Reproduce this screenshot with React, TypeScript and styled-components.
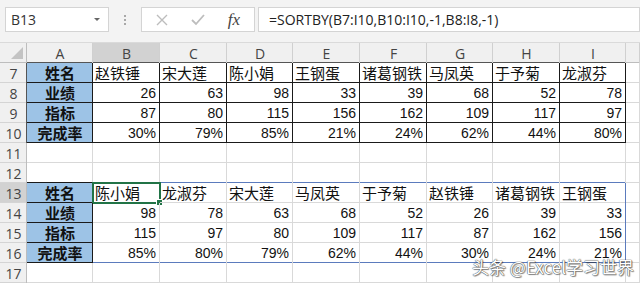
import * as React from 'react';
import styled, { createGlobalStyle, css } from 'styled-components';

const GlobalStyle = createGlobalStyle`
  html, body {
    margin: 0;
    padding: 0;
    background: #ffffff;
    overflow: hidden;
  }
  body {
    font-family: "Liberation Sans", "Noto Sans CJK SC", sans-serif;
  }
`;

const COL_WIDTHS = [66, 67, 67, 66, 67, 67, 66, 67, 66];
const LETTERS = ['A', 'B', 'C', 'D', 'E', 'F', 'G', 'H', 'I', ''];

const GRID = '#d9d9d9';
const BLACK = '#1a1a1a';
const SPILL = '#5b7bbd';

const labels = ['姓名', '业绩', '指标', '完成率'];

const top = [
  ['赵铁锤', '宋大莲', '陈小娟', '王钢蛋', '诸葛钢铁', '马凤英', '于予菊', '龙淑芬'],
  ['26', '63', '98', '33', '39', '68', '52', '78'],
  ['87', '80', '115', '156', '162', '109', '117', '97'],
  ['30%', '79%', '85%', '21%', '24%', '62%', '44%', '80%'],
];

const sorted = [
  ['陈小娟', '龙淑芬', '宋大莲', '马凤英', '于予菊', '赵铁锤', '诸葛钢铁', '王钢蛋'],
  ['98', '78', '63', '68', '52', '26', '39', '33'],
  ['115', '97', '80', '109', '117', '87', '162', '156'],
  ['85%', '80%', '79%', '62%', '44%', '30%', '24%', '21%'],
];

type CellInfo = { text: string; kind: 'empty' | 'label' | 'name' | 'num' };

function cellAt(row: number, col: number): CellInfo {
  // col 0 = A
  const block = row >= 7 && row <= 10 ? top : row >= 13 && row <= 16 ? sorted : null;
  if (!block) return { text: '', kind: 'empty' };
  const r = row >= 13 ? row - 13 : row - 7;
  if (col === 0) return { text: labels[r], kind: 'label' };
  if (col > 8) return { text: '', kind: 'empty' };
  return { text: block[r][col - 1], kind: r === 0 ? 'name' : 'num' };
}

// colour of the right / bottom edge of a cell
function rightEdge(row: number, col: number): string {
  if (row >= 7 && row <= 10 && col <= 8) return BLACK;
  if (row >= 13 && row <= 16) {
    if (col === 0) return BLACK;
    if (col === 8) return SPILL;
  }
  return GRID;
}

function bottomEdge(row: number, col: number): string {
  if (row >= 7 && row <= 10 && col <= 8) return BLACK;
  if (row === 12 && col === 0) return BLACK;
  if (row === 12 && col >= 1 && col <= 8) return SPILL;
  if (row >= 13 && row <= 16 && col === 0) return BLACK;
  if (row === 16 && col >= 1 && col <= 8) return SPILL;
  return GRID;
}

const Window = styled.div`
  width: 640px;
  height: 283px;
  position: relative;
  overflow: hidden;
  background: #fff;
`;

const FormulaBar = styled.div`
  height: 43px;
  box-sizing: border-box;
  display: flex;
  align-items: flex-start;
  padding: 7px 0 0 5px;
  background: #f3f3f3;
  border-bottom: 1px solid #dadada;
`;

const Box = styled.div<{ $w?: number }>`
  height: 25px;
  box-sizing: border-box;
  background: #fff;
  border: 1px solid #d4d4d4;
  display: flex;
  align-items: center;
  ${(p) => (p.$w ? css`width: ${p.$w}px; flex: none;` : css`flex: 1;`)}
`;

const NameText = styled.span`
  flex: 1;
  padding-left: 5px;
  font-family: "Open Sans", "Liberation Sans", sans-serif;
  font-size: 14px;
  color: #333;
`;

const Caret = styled.span`
  width: 0;
  height: 0;
  margin-right: 8px;
  border-left: 3px solid transparent;
  border-right: 3px solid transparent;
  border-top: 3px solid #666;
`;

const Grip = styled.div`
  width: 32px;
  flex: none;
  display: flex;
  justify-content: center;
  align-items: center;
  height: 25px;
  flex-direction: column;
  gap: 2px;
`;

const Dot = styled.span`
  width: 2px;
  height: 2px;
  background: #a8a8a8;
`;

const IconBtn = styled.span`
  width: 36px;
  display: flex;
  justify-content: center;
  align-items: center;
`;

const Fx = styled.span`
  font-family: "Liberation Serif", serif;
  font-style: italic;
  font-size: 17px;
  color: #444;
`;

const FormulaText = styled.span`
  padding-left: 10px;
  font-family: "Open Sans", "Liberation Sans", sans-serif;
  font-size: 14px;
  color: #222;
  white-space: nowrap;
`;

const Sheet = styled.div`
  display: grid;
  grid-template-columns: 27px ${COL_WIDTHS.map((w) => `${w}px`).join(' ')} 1fr;
  grid-auto-rows: 20px;
`;

const Corner = styled.div`
  background: #f0f0f0;
  box-shadow: inset -1px -1px 0 #bdbdbd;
  position: relative;
  &::after {
    content: '';
    position: absolute;
    right: 4px;
    bottom: 4px;
    width: 0;
    height: 0;
    border-left: 12px solid transparent;
    border-bottom: 12px solid #c3c3c3;
  }
`;

const ColHead = styled.div<{ $active?: boolean; $edge: string }>`
  background: ${(p) => (p.$active ? '#d2d2d2' : '#f0f0f0')};
  box-shadow: inset -1px 0 0 #d0d0d0, inset 0 -1px 0 ${(p) => p.$edge};
  display: flex;
  align-items: center;
  justify-content: center;
  font-family: "Open Sans", "Liberation Sans", sans-serif;
  font-size: 14px;
  color: #444;
`;

const RowHead = styled.div<{ $active?: boolean; $edge: string }>`
  background: ${(p) => (p.$active ? '#d2d2d2' : '#f0f0f0')};
  box-shadow: inset -1px 0 0 ${(p) => p.$edge}, inset 0 -1px 0 #d4d4d4;
  display: flex;
  align-items: center;
  justify-content: center;
  font-family: "Open Sans", "Liberation Sans", sans-serif;
  font-size: 14px;
  color: #444;
`;

const Cell = styled.div<{ $kind: CellInfo['kind']; $right: string; $bottom: string }>`
  position: relative;
  box-shadow: inset -1px 0 0 ${(p) => p.$right}, inset 0 -1px 0 ${(p) => p.$bottom};
  display: flex;
  align-items: center;
  padding: 0 3px 1px 3px;
  box-sizing: border-box;
  white-space: nowrap;
  overflow: visible;
  color: #111;
  font-family: "Liberation Sans", "Noto Sans CJK SC", sans-serif;
  font-size: 14px;
  ${(p) =>
    p.$kind === 'label' &&
    css`
      background: #9dc3e6;
      justify-content: center;
      font-family: "Noto Sans CJK SC", sans-serif;
      font-weight: 700;
      font-size: 15px;
    `}
  ${(p) =>
    p.$kind === 'name' &&
    css`
      justify-content: flex-start;
      font-family: "Noto Sans CJK SC", sans-serif;
      font-size: 15px;
      padding-left: 2px;
    `}
  ${(p) =>
    p.$kind === 'num' &&
    css`
      justify-content: flex-end;
      padding-right: 4px;
    `}
`;

const Selection = styled.div`
  position: absolute;
  left: -1px;
  top: -1px;
  right: -1px;
  bottom: -1px;
  border: 2px solid #217346;
  pointer-events: none;
  &::after {
    content: '';
    position: absolute;
    right: -4px;
    bottom: -4px;
    width: 5px;
    height: 5px;
    background: #217346;
    border: 1px solid #fff;
  }
`;

const Watermark = styled.div`
  position: absolute;
  right: 6px;
  bottom: 6px;
  font-family: "Noto Sans CJK SC", sans-serif;
  font-size: 17px;
  line-height: 20px;
  color: #fff;
  text-shadow: 0 0 1px #444, 0 0 1px #444, 1px 1px 1px rgba(0, 0, 0, 0.45);
`;

const Cross = () => (
  <svg width="14" height="14" viewBox="0 0 14 14">
    <path d="M2 2 L12 12 M12 2 L2 12" stroke="#bdbdbd" strokeWidth="1.4" fill="none" />
  </svg>
);

const Check = () => (
  <svg width="16" height="14" viewBox="0 0 16 14">
    <path d="M2 7 L6 11 L14 2" stroke="#bdbdbd" strokeWidth="1.8" fill="none" />
  </svg>
);

const rows = [7, 8, 9, 10, 11, 12, 13, 14, 15, 16, 17];

export default function App() {
  return (
    <Window>
      <GlobalStyle />
      <FormulaBar>
        <Box $w={104}>
          <NameText>B13</NameText>
          <Caret />
        </Box>
        <Grip>
          <Dot />
          <Dot />
          <Dot />
        </Grip>
        <Box $w={114}>
          <IconBtn style={{ marginLeft: 2 }}>
            <Cross />
          </IconBtn>
          <IconBtn>
            <Check />
          </IconBtn>
          <IconBtn>
            <Fx>fx</Fx>
          </IconBtn>
        </Box>
        <Box style={{ marginLeft: 3 }}>
          <FormulaText>=SORTBY(B7:I10,B10:I10,-1,B8:I8,-1)</FormulaText>
        </Box>
      </FormulaBar>
      <Sheet>
        <Corner />
        {LETTERS.map((l, i) => (
          <ColHead key={l + i} $active={l === 'B'} $edge={i <= 8 ? '#555' : '#bdbdbd'}>
            {l}
          </ColHead>
        ))}
        {rows.map((row) => (
          <React.Fragment key={row}>
            <RowHead $active={row === 13} $edge={row >= 7 && row <= 10 ? '#555' : '#bdbdbd'}>
              {row}
            </RowHead>
            {LETTERS.map((_, col) => {
              const c = cellAt(row, col);
              return (
                <Cell
                  key={col}
                  $kind={c.kind}
                  $right={rightEdge(row, col)}
                  $bottom={bottomEdge(row, col)}
                >
                  {c.text}
                  {row === 13 && col === 1 && <Selection />}
                </Cell>
              );
            })}
          </React.Fragment>
        ))}
      </Sheet>
      <Watermark>头条 @Excel学习世界</Watermark>
    </Window>
  );
}
